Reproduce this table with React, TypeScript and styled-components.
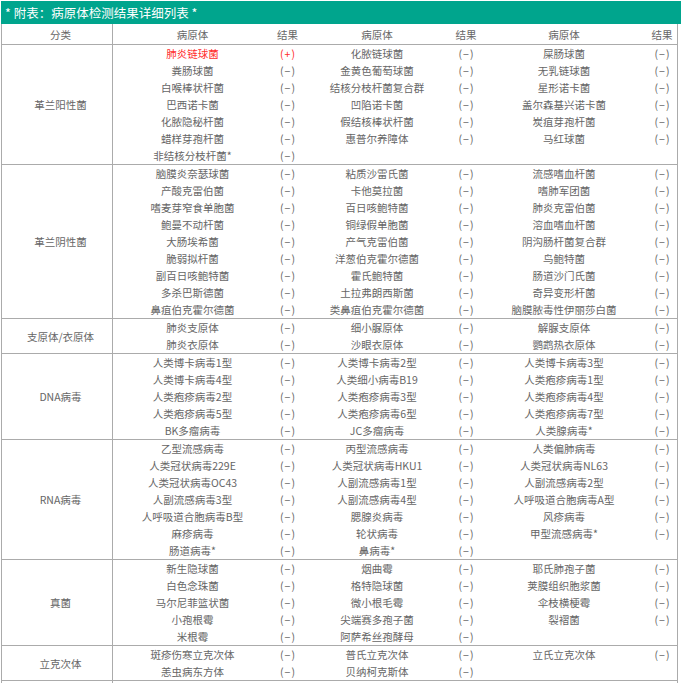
import React from "react";
import styled, { createGlobalStyle } from "styled-components";

const Global = createGlobalStyle`
  html, body { margin: 0; padding: 0; background: #fff; }
  body { font-family: "Noto Sans CJK SC", "Noto Sans", sans-serif; }
  * { box-sizing: border-box; }
`;

const COLS = "111px 159px 31px 148px 30px 166px 30px";

const Page = styled.div`
  padding: 1px 0 0 1px;
  width: 681px;
  height: 683px;
  overflow: hidden;
`;

const TitleBar = styled.div`
  height: 23px;
  width: 680px;
  background: #00a58d;
  color: #fff;
  font-size: 12.5px;
  line-height: 23px;
  padding-left: 4px;
  white-space: nowrap;
`;

const Table = styled.div`
  width: 677px;
  border-left: 1px solid #ababab;
  border-right: 1px solid #ababab;
`;

const HeaderRow = styled.div`
  display: grid;
  grid-template-columns: ${COLS};
  height: 21px;
  border-bottom: 1px solid #ababab;
`;

const HeadCell = styled.div<{ $cat?: boolean }>`
  display: flex;
  align-items: center;
  justify-content: center;
  font-size: 10.5px;
  color: #666;
  white-space: nowrap;
  ${(p) => (p.$cat ? "border-right: 1px solid #ababab; padding-left: 7px;" : "")}
`;

const Section = styled.div<{ $rows: number }>`
  display: grid;
  grid-template-columns: ${COLS};
  grid-template-rows: repeat(${(p) => p.$rows}, 17px);
  border-bottom: 1px solid #ababab;
`;

const Category = styled.div`
  grid-column: 1;
  grid-row: 1 / -1;
  border-right: 1px solid #ababab;
  display: flex;
  align-items: center;
  justify-content: center;
  padding-left: 7px;
  font-size: 10.5px;
  color: #666;
  white-space: nowrap;
`;

const Cell = styled.div<{ $pos?: boolean }>`
  display: flex;
  align-items: center;
  justify-content: center;
  font-size: 10.5px;
  line-height: 17px;
  color: ${(p) => (p.$pos ? "#ff2b2b" : "#666")};
  white-space: nowrap;
`;

const Result = styled(Cell)`
  letter-spacing: 1px;
  padding-left: 1px;
`;

type Item = [string, string] | null;
type Row = [Item, Item, Item];

const n = (name: string): Item => [name, "(−)"];

const sections: { cat: string; rows: Row[] }[] = [
  {
    cat: "革兰阳性菌",
    rows: [
      [["肺炎链球菌", "(+)"], n("化脓链球菌"), n("屎肠球菌")],
      [n("粪肠球菌"), n("金黄色葡萄球菌"), n("无乳链球菌")],
      [n("白喉棒状杆菌"), n("结核分枝杆菌复合群"), n("星形诺卡菌")],
      [n("巴西诺卡菌"), n("凹陷诺卡菌"), n("盖尔森基兴诺卡菌")],
      [n("化脓隐秘杆菌"), n("假结核棒状杆菌"), n("炭疽芽孢杆菌")],
      [n("蜡样芽孢杆菌"), n("惠普尔养障体"), n("马红球菌")],
      [n("非结核分枝杆菌*"), null, null],
    ],
  },
  {
    cat: "革兰阴性菌",
    rows: [
      [n("脑膜炎奈瑟球菌"), n("粘质沙雷氏菌"), n("流感嗜血杆菌")],
      [n("产酸克雷伯菌"), n("卡他莫拉菌"), n("嗜肺军团菌")],
      [n("嗜麦芽窄食单胞菌"), n("百日咳鲍特菌"), n("肺炎克雷伯菌")],
      [n("鲍曼不动杆菌"), n("铜绿假单胞菌"), n("溶血嗜血杆菌")],
      [n("大肠埃希菌"), n("产气克雷伯菌"), n("阴沟肠杆菌复合群")],
      [n("脆弱拟杆菌"), n("洋葱伯克霍尔德菌"), n("鸟鲍特菌")],
      [n("副百日咳鲍特菌"), n("霍氏鲍特菌"), n("肠道沙门氏菌")],
      [n("多杀巴斯德菌"), n("土拉弗朗西斯菌"), n("奇异变形杆菌")],
      [n("鼻疽伯克霍尔德菌"), n("类鼻疽伯克霍尔德菌"), n("脑膜脓毒性伊丽莎白菌")],
    ],
  },
  {
    cat: "支原体/衣原体",
    rows: [
      [n("肺炎支原体"), n("细小脲原体"), n("解脲支原体")],
      [n("肺炎衣原体"), n("沙眼衣原体"), n("鹦鹉热衣原体")],
    ],
  },
  {
    cat: "DNA病毒",
    rows: [
      [n("人类博卡病毒1型"), n("人类博卡病毒2型"), n("人类博卡病毒3型")],
      [n("人类博卡病毒4型"), n("人类细小病毒B19"), n("人类疱疹病毒1型")],
      [n("人类疱疹病毒2型"), n("人类疱疹病毒3型"), n("人类疱疹病毒4型")],
      [n("人类疱疹病毒5型"), n("人类疱疹病毒6型"), n("人类疱疹病毒7型")],
      [n("BK多瘤病毒"), n("JC多瘤病毒"), n("人类腺病毒*")],
    ],
  },
  {
    cat: "RNA病毒",
    rows: [
      [n("乙型流感病毒"), n("丙型流感病毒"), n("人类偏肺病毒")],
      [n("人类冠状病毒229E"), n("人类冠状病毒HKU1"), n("人类冠状病毒NL63")],
      [n("人类冠状病毒OC43"), n("人副流感病毒1型"), n("人副流感病毒2型")],
      [n("人副流感病毒3型"), n("人副流感病毒4型"), n("人呼吸道合胞病毒A型")],
      [n("人呼吸道合胞病毒B型"), n("腮腺炎病毒"), n("风疹病毒")],
      [n("麻疹病毒"), n("轮状病毒"), n("甲型流感病毒*")],
      [n("肠道病毒*"), n("鼻病毒*"), null],
    ],
  },
  {
    cat: "真菌",
    rows: [
      [n("新生隐球菌"), n("烟曲霉"), n("耶氏肺孢子菌")],
      [n("白色念珠菌"), n("格特隐球菌"), n("荚膜组织胞浆菌")],
      [n("马尔尼菲篮状菌"), n("微小根毛霉"), n("伞枝横梗霉")],
      [n("小孢根霉"), n("尖端赛多孢子菌"), n("裂褶菌")],
      [n("米根霉"), n("阿萨希丝孢酵母"), null],
    ],
  },
  {
    cat: "立克次体",
    rows: [
      [n("斑疹伤寒立克次体"), n("普氏立克次体"), n("立氏立克次体")],
      [n("恙虫病东方体"), n("贝纳柯克斯体"), null],
    ],
  },
];

export default function App() {
  return (
    <>
      <Global />
      <Page>
        <TitleBar>* 附表：病原体检测结果详细列表 *</TitleBar>
        <Table>
          <HeaderRow>
            <HeadCell $cat>分类</HeadCell>
            <HeadCell>病原体</HeadCell>
            <HeadCell>结果</HeadCell>
            <HeadCell>病原体</HeadCell>
            <HeadCell>结果</HeadCell>
            <HeadCell>病原体</HeadCell>
            <HeadCell>结果</HeadCell>
          </HeaderRow>
          {sections.map((s) => (
            <Section key={s.cat} $rows={s.rows.length}>
              <Category>{s.cat}</Category>
              {s.rows.map((row, ri) =>
                row.map((item, ci) => {
                  const pos = item ? item[1] === "(+)" : false;
                  return (
                    <React.Fragment key={`${ri}-${ci}`}>
                      <Cell $pos={pos} style={{ gridRow: ri + 1, gridColumn: ci * 2 + 2 }}>
                        {item ? item[0] : ""}
                      </Cell>
                      <Result $pos={pos} style={{ gridRow: ri + 1, gridColumn: ci * 2 + 3 }}>
                        {item ? item[1] : ""}
                      </Result>
                    </React.Fragment>
                  );
                })
              )}
            </Section>
          ))}
          <Section $rows={2}>
            <Category />
          </Section>
        </Table>
      </Page>
    </>
  );
}
